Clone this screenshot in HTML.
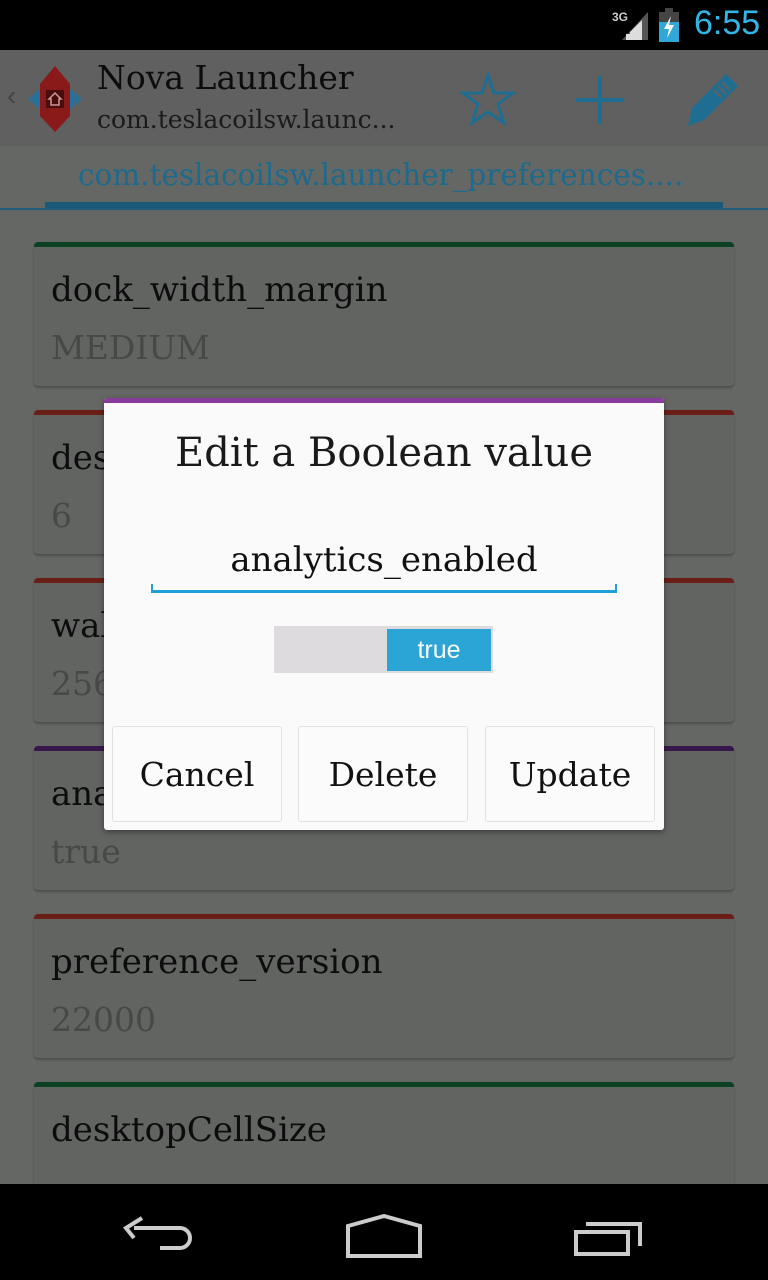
<!DOCTYPE html>
<html><head><meta charset="utf-8"><style>
*{margin:0;padding:0;box-sizing:border-box}
body{width:768px;height:1280px;overflow:hidden;background:#656765;font-family:"DejaVu Serif","Liberation Serif",serif;position:relative}
.abs{position:absolute}
.status{left:0;top:0;width:768px;height:50px;background:#000}
.abar{left:0;top:50px;width:768px;height:96px;background:#5f605f}
.tabs{left:0;top:146px;width:768px;height:64px;background:#656765;border-bottom:2px solid #1f5f7a}
.card{left:34px;width:700px;height:144px;background:#626462;border-radius:4px;box-shadow:0 2px 2px rgba(0,0,0,.25)}
.card .bar{position:absolute;left:0;top:0;width:100%;height:5px;border-radius:4px 4px 0 0}
.card .k{position:absolute;left:17px;top:28px;font-size:34px;color:#0c0c0c;white-space:nowrap}
.card .v{position:absolute;left:17px;top:86px;font-size:33px;color:#474947;white-space:nowrap}
.nav{left:0;top:1184px;width:768px;height:96px;background:#000}
.dlg{left:104px;top:398px;width:560px;height:432px;background:#fafafa;border-radius:3px;overflow:hidden;box-shadow:0 2px 6px rgba(0,0,0,.4)}
.btn{position:absolute;top:328px;height:96px;width:170px;border:1px solid #e2e2e2;border-radius:3px;background:#fbfbfb;font-size:33px;color:#111;text-align:center;line-height:96px}
</style></head><body>
<div class="abs status">
 <div class="abs" style="left:612px;top:10px;font:bold 12px 'Liberation Sans',sans-serif;color:#ccc">3G</div>
 <svg class="abs" style="left:620px;top:10px" width="30" height="32"><polygon points="28,2 28,30 2,30" fill="#555"/><polygon points="22,10 22,30 10,30 10,22" fill="#ddd"/><rect x="6" y="24" width="4" height="6" fill="#ddd"/></svg>
 <svg class="abs" style="left:656px;top:8px" width="26" height="34"><rect x="9" y="0" width="8" height="4" fill="#444"/><rect x="3" y="4" width="20" height="30" fill="#444"/><rect x="3" y="14" width="20" height="20" fill="#33a6d8"/><polygon points="15,8 8,21 13,21 11,30 18,17 13,17" fill="#fff"/></svg>
 <div class="abs" style="left:694px;top:4px;font:34px 'Liberation Sans',sans-serif;color:#33b5e5">6:55</div>
</div>
<div class="abs abar">
 <div class="abs" style="left:7px;top:30px;font:28px 'Liberation Sans',sans-serif;color:#444">‹</div>
 <svg class="abs" style="left:20px;top:14px" width="70" height="70"><polygon points="8,35 28,18 28,52" fill="#2a6f98"/><polygon points="62,35 42,18 42,52" fill="#2a6f98"/><polygon points="35,2 50,20 50,52 35,68 20,52 20,20" fill="#8a1a1a"/><rect x="26" y="26" width="18" height="18" fill="#4a0d0d"/><polygon points="35,29 41,35 39,35 39,41 31,41 31,35 29,35" fill="none" stroke="#c99" stroke-width="1.5"/></svg>
 <div class="abs" style="left:97px;top:8px;font-size:33px;color:#0c0c0c">Nova Launcher</div>
 <div class="abs" style="left:97px;top:55px;font-size:25px;color:#1b1b1b">com.teslacoilsw.launc...</div>
 <svg class="abs" style="left:460px;top:22px" width="56" height="54"><polygon points="28,3 34,21 53,21 38,32 44,51 28,40 12,51 18,32 3,21 22,21" fill="none" stroke="#1f6e92" stroke-width="3" stroke-linejoin="miter"/></svg>
 <svg class="abs" style="left:574px;top:24px" width="52" height="52"><path d="M26 2V50M2 26H50" stroke="#1f6e92" stroke-width="4"/></svg>
 <svg class="abs" style="left:682px;top:18px" width="60" height="64"><polygon points="6,58 10,40 44,6 56,18 22,52" fill="#1f6e92"/><path d="M40 14l8 8M36 18l8 8M32 22l8 8" stroke="#5f605f" stroke-width="2"/></svg>
</div>
<div class="abs tabs">
 <div class="abs" style="left:78px;top:12px;font-size:29.5px;color:#1d6a8c;white-space:nowrap">com.teslacoilsw.launcher_preferences....</div>
 <div class="abs" style="left:45px;top:56px;width:678px;height:6px;background:#1a5a78"></div>
</div>

<div class="abs card" style="top:242px"><div class="bar" style="background:#0d4124"></div><div class="k">dock_width_margin</div><div class="v">MEDIUM</div></div>
<div class="abs card" style="top:410px"><div class="bar" style="background:#6a1f16"></div><div class="k">desktop</div><div class="v">6</div></div>
<div class="abs card" style="top:578px"><div class="bar" style="background:#6a1f16"></div><div class="k">wallpaper</div><div class="v">256</div></div>
<div class="abs card" style="top:746px"><div class="bar" style="background:#37184a"></div><div class="k">analytics</div><div class="v">true</div></div>
<div class="abs card" style="top:914px"><div class="bar" style="background:#6a1f16"></div><div class="k">preference_version</div><div class="v">22000</div></div>
<div class="abs card" style="top:1082px;height:110px"><div class="bar" style="background:#0d4124"></div><div class="k">desktopCellSize</div></div>

<div class="abs dlg">
 <div class="abs" style="left:0;top:0;width:560px;height:5px;background:#8a3a9a"></div>
 <div class="abs" style="left:0;top:32px;width:560px;text-align:center;font-size:40px;color:#1a1a1a">Edit a Boolean value</div>
 <div class="abs" style="left:0;top:142px;width:560px;text-align:center;font-size:34px;color:#111">analytics_enabled</div>
 <div class="abs" style="left:47px;top:192px;width:466px;height:3px;background:#20a0d8"></div>
 <div class="abs" style="left:47px;top:186px;width:2px;height:8px;background:#20a0d8"></div>
 <div class="abs" style="left:511px;top:186px;width:2px;height:8px;background:#20a0d8"></div>
 <div class="abs" style="left:170px;top:228px;width:219px;height:47px;background:#dddbde"></div>
 <div class="abs" style="left:283px;top:231px;width:104px;height:42px;background:#2aa5d6;color:#fff;text-align:center;font-family:'Liberation Sans',sans-serif;font-size:25px;line-height:42px">true</div>
 <div class="btn" style="left:8px">Cancel</div>
 <div class="btn" style="left:194px">Delete</div>
 <div class="btn" style="left:381px">Update</div>
</div>

<div class="abs nav">
 <svg class="abs" style="left:120px;top:30px" width="80" height="44"><path d="M14 14H60a10 10 0 0 1 0 20H40M22 4L6 14L14 24" fill="none" stroke="#ccc" stroke-width="4"/></svg>
 <svg class="abs" style="left:344px;top:30px" width="80" height="44"><polygon points="4,12 40,2 76,12 76,42 4,42" fill="none" stroke="#ccc" stroke-width="4"/></svg>
 <svg class="abs" style="left:572px;top:34px" width="76" height="40"><rect x="4" y="14" width="52" height="22" fill="none" stroke="#ccc" stroke-width="4"/><path d="M14 6H68V28" fill="none" stroke="#ccc" stroke-width="4"/></svg>
</div>
</body></html>
